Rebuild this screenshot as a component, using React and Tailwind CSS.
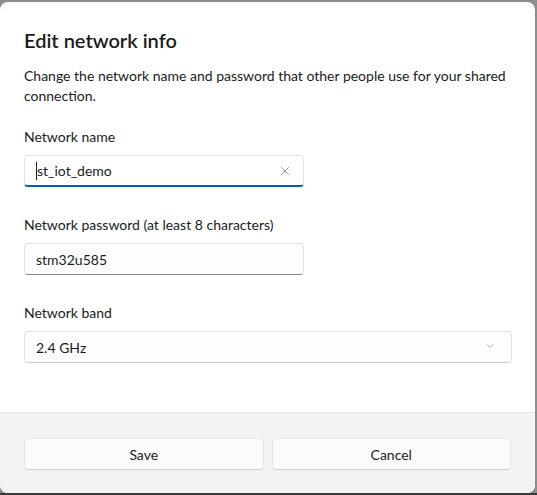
import { X, ChevronDown } from 'lucide-react';

export default function App() {
  return (
    <div className="w-[537px] h-[495px] bg-[#8d8d8d] overflow-hidden flex flex-col" style={{ fontFamily: 'Lato, "Noto Sans", sans-serif' }}>
      <div className="pt-[2px] pr-[2px]">
        <div className="w-[535px] h-[491px] bg-white rounded-lg overflow-hidden flex flex-col text-[#1b1b1b]">
          <div className="flex-1 px-6 pt-6">
            <h1 className="text-[20px] leading-[28px] font-semibold">Edit network info</h1>
            <p className="mt-3 text-[14px] leading-[20px]">
              Change the network name and password that other people use for your shared connection.
            </p>

            <label className="block mt-[21px] text-[14px] leading-[20px]">Network name</label>
            <div className="mt-2 w-[280px] h-[32px] rounded-[4px] border border-[#e5e5e5] border-b-2 border-b-[#005fb8] bg-white flex items-center pl-[11px] pr-[11px]">
              <span className="w-px h-[18px] bg-[#1b1b1b]" />
              <span className="text-[14px] flex-1">st_iot_demo</span>
              <X size={14} strokeWidth={1.1} className="text-[#5f5f5f]" />
            </div>

            <label className="block mt-[28px] text-[14px] leading-[20px]">Network password (at least 8 characters)</label>
            <div className="mt-2 w-[280px] h-[32px] rounded-[4px] border border-[#e5e5e5] border-b-[#8a8a8a] bg-[#fdfdfd] flex items-center px-[11px]">
              <span className="text-[14px]">stm32u585</span>
            </div>

            <label className="block mt-[28px] text-[14px] leading-[20px]">Network band</label>
            <div className="mt-2 w-[488px] h-[32px] rounded-[4px] border border-[#e5e5e5] border-b-[#d0d0d0] bg-[#fdfdfd] flex items-center justify-between pl-[11px] pr-[15px]">
              <span className="text-[14px]">2.4 GHz</span>
              <ChevronDown size={12} strokeWidth={1.2} className="text-[#7a7a7a] -mt-[2px]" />
            </div>
          </div>

          <div className="h-[81px] bg-[#f3f3f3] border-t border-[#e5e5e5] px-6 pt-[25px] flex gap-2">
            <button className="flex-1 h-[32px] rounded-[4px] bg-[#fbfbfb] border border-[#e5e5e5] border-b-[#cccccc] text-[14px]">Save</button>
            <button className="flex-1 h-[32px] rounded-[4px] bg-[#fbfbfb] border border-[#e5e5e5] border-b-[#cccccc] text-[14px]">Cancel</button>
          </div>
        </div>
      </div>
      <div className="flex-1 bg-[#3a3a3a]" />
    </div>
  );
}
